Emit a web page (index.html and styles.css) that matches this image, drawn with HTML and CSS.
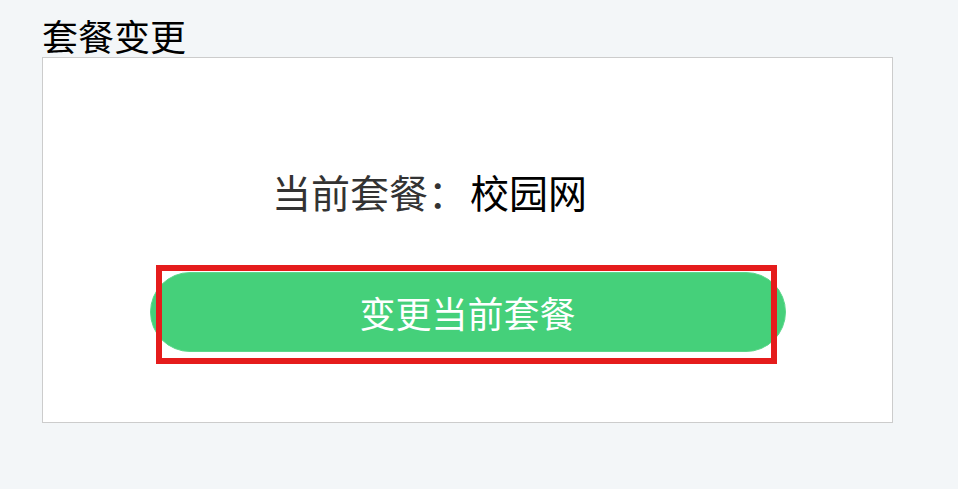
FILE: index.html
```html
<!DOCTYPE html>
<html lang="zh-CN">

<head>
    <meta charset="utf8">
    <title>套餐变更</title>
    <link rel="stylesheet" href="styles.css">
</head>

<body>
    <div class="page">
        <h1 class="title">套餐变更</h1>
        <div class="card">
            <div class="current">
                <span class="label">当前套餐：</span><span class="value">校园网</span>
            </div>
            <div class="actions">
                <button class="change">变更当前套餐</button>
                <div class="highlight"></div>
            </div>
        </div>
    </div>
</body>

</html>
```

FILE: styles.css
```css
* {
    box-sizing: border-box;
}

body {
    margin: 0;
    background-color: #f3f6f8;
    font-family: "Noto Sans CJK SC", "Noto Sans", sans-serif;
}

div.page {
    display: flex;
    flex-direction: column;
    padding: 14px 0 0 42px;
}

h1.title {
    margin: 0;
    font-size: 36px;
    font-weight: normal;
    line-height: 43px;
    color: #000;
}

div.card {
    display: flex;
    flex-direction: column;
    width: 851px;
    height: 366px;
    background-color: #fff;
    border: 1px solid #cccccc;
    padding-top: 109px;
}

div.card div.current {
    padding-left: 229px;
    font-size: 39px;
    line-height: 48px;
}

div.card div.current span.label {
    color: #333;
}

div.card div.current span.value {
    margin-left: 3px;
    color: #000;
}

div.card div.actions {
    position: relative;
    align-self: center;
    margin-top: 57px;
}

div.card div.actions button.change {
    display: block;
    width: 636px;
    height: 80px;
    border: 1px solid #5cd78b;
    border-radius: 40px;
    background-color: #45d07a;
    color: #fff;
    font-family: inherit;
    font-size: 36px;
    line-height: 1;
    cursor: pointer;
}

/* annotation box laid over the button */
div.card div.actions div.highlight {
    position: absolute;
    left: 6px;
    top: -7px;
    width: 621px;
    height: 99px;
    border: 6px solid #e51c1c;
    pointer-events: none;
}
```
